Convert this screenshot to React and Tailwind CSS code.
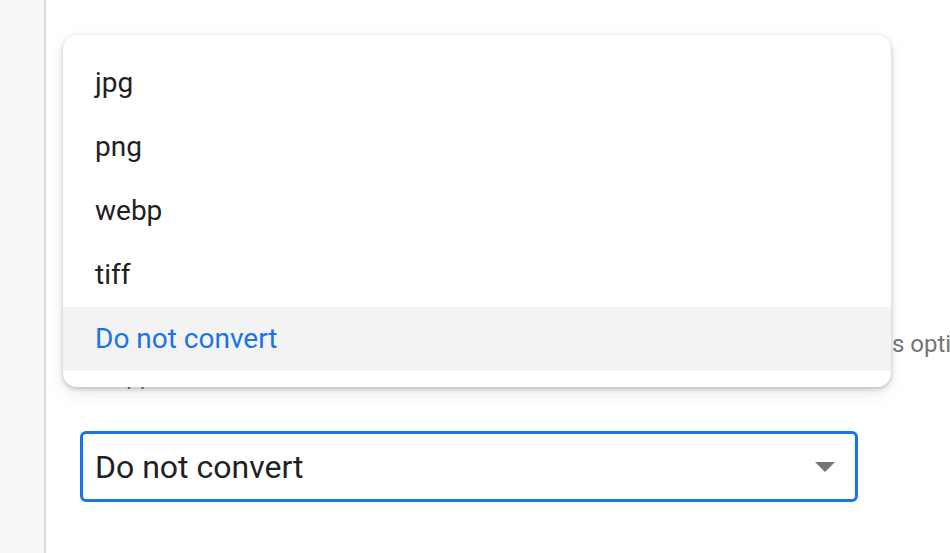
import { useState } from 'react';

const FORMATS = ['jpg', 'png', 'webp', 'tiff', 'Do not convert'];

export default function App() {
  const [value] = useState('Do not convert');

  return (
    <div className="flex h-[553px] w-[950px] overflow-hidden bg-white font-['Roboto',sans-serif]">
      <div className="w-[46px] shrink-0 border-r-2 border-[#dcdcdc] bg-[#f8f8f8]" />

      <div className="relative flex-1 overflow-hidden pl-[34px]">
        <div className="mt-[328px] text-[24px] leading-[32px] text-[#757575]">
          <div className="flex whitespace-nowrap">
            <span className="inline-block w-[812px] shrink-0 overflow-hidden">
              Image format used for converted uploads. This applies to all of the upload
            </span>
            <span>s options in the settings</span>
          </div>
          <div className="whitespace-nowrap">All apps can read the converted file.</div>
        </div>

        <div className="mt-[39px] flex h-[71px] w-[778px] items-center justify-between rounded-[6px] border-[3px] border-[#1a73e8] pl-[12px] pr-[20px]">
          <span className="text-[32px] text-[#202124]">{value}</span>
          <svg width="20" height="10" viewBox="0 0 20 10" className="mt-[1px]">
            <path d="M0 0h20L10 10z" fill="#757575" />
          </svg>
        </div>

        <ul className="absolute left-[17px] top-[35px] w-[828px] rounded-[14px] bg-white py-[16px] shadow-[0_2px_5px_rgba(0,0,0,0.22),0_6px_18px_rgba(0,0,0,0.08)]">
          {FORMATS.map((f) => (
            <li
              key={f}
              className={
                f === value
                  ? 'flex h-[64px] items-center bg-[#f3f3f3] pl-[32px] text-[28px] text-[#1a73e8]'
                  : 'flex h-[64px] items-center pl-[32px] text-[28px] text-[#202124]'
              }
            >
              {f}
            </li>
          ))}
        </ul>
      </div>
    </div>
  );
}
